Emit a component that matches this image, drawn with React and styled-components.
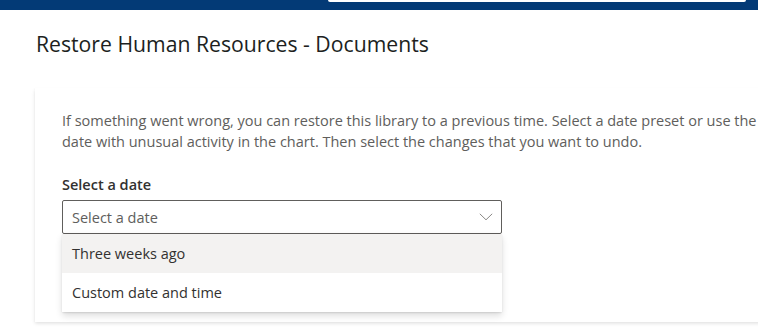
import React from 'react';
import styled, { createGlobalStyle } from 'styled-components';

const GlobalStyle = createGlobalStyle`
  html, body {
    margin: 0;
    padding: 0;
    background: #ffffff;
    overflow: hidden;
  }
  body {
    font-family: "Open Sans", "Noto Sans", sans-serif;
    color: #323130;
  }
`;

const Page = styled.div`
  width: 758px;
  height: 329px;
  overflow: hidden;
`;

const SuiteBar = styled.div`
  display: flex;
  height: 10px;
  background: #033a76;
`;

const SearchEdge = styled.div`
  margin-left: 328px;
  width: 418px;
  height: 2px;
  background: #ffffff;
  border-radius: 0 0 4px 4px;
`;

const Content = styled.div`
  padding: 20px 0 0 36px;
`;

const Title = styled.h1`
  margin: 0;
  font-size: 21.2px;
  line-height: 28px;
  font-weight: 400;
  color: #201f1e;
`;

const Card = styled.section`
  margin: 30px 0 0 -1px;
  width: 800px;
  height: 234px;
  box-sizing: border-box;
  padding: 22px 27px;
  background: #ffffff;
  box-shadow: 0 1.6px 3.6px rgba(0, 0, 0, 0.13), 0 0.3px 0.9px rgba(0, 0, 0, 0.11);
`;

const Intro = styled.p`
  margin: 0;
  font-size: 14.5px;
  line-height: 21px;
  color: #605e5c;
  white-space: nowrap;
`;

const Label = styled.label`
  display: block;
  margin-top: 18px;
  padding: 5px 0;
  font-size: 14.5px;
  line-height: 20px;
  font-weight: 600;
  color: #323130;
`;

const Field = styled.div`
  position: relative;
  width: 440px;
`;

const Select = styled.div`
  display: flex;
  align-items: center;
  justify-content: space-between;
  height: 34px;
  box-sizing: border-box;
  padding: 0 8px 0 9px;
  border: 1px solid #605e5c;
  border-radius: 2px;
  font-size: 14.5px;
  color: #605e5c;
`;

const Menu = styled.ul`
  position: absolute;
  left: 0;
  right: 0;
  top: 34px;
  margin: 0;
  padding: 0;
  list-style: none;
  background: #ffffff;
  border-radius: 2px;
  box-shadow: 0 3.2px 7.2px rgba(0, 0, 0, 0.13), 0 0.6px 1.8px rgba(0, 0, 0, 0.11);
`;

const Option = styled.li`
  display: flex;
  align-items: center;
  height: 39px;
  padding: 0 10px;
  font-size: 14.5px;
  color: #323130;
  background: ${p => (p.$hover ? '#f3f2f1' : '#ffffff')};
`;

const Chevron = () => (
  <svg width="14" height="8" viewBox="0 0 14 8" fill="none">
    <path d="M0.8 0.8 L7 6.8 L13.2 0.8" stroke="#8a8886" strokeWidth="1" />
  </svg>
);

const options = ['Three weeks ago', 'Custom date and time'];

export default function App() {
  return (
    <Page>
      <GlobalStyle />
      <SuiteBar>
        <SearchEdge />
      </SuiteBar>
      <Content>
        <Title>Restore Human Resources - Documents</Title>
        <Card>
          <Intro>
            If something went wrong, you can restore this library to a previous time. Select a date preset or use the
            <br />
            date with unusual activity in the chart. Then select the changes that you want to undo.
          </Intro>
          <Label>Select a date</Label>
          <Field>
            <Select>
              <span>Select a date</span>
              <Chevron />
            </Select>
            <Menu>
              {options.map((o, i) => (
                <Option key={o} $hover={i === 0}>{o}</Option>
              ))}
            </Menu>
          </Field>
        </Card>
      </Content>
    </Page>
  );
}
